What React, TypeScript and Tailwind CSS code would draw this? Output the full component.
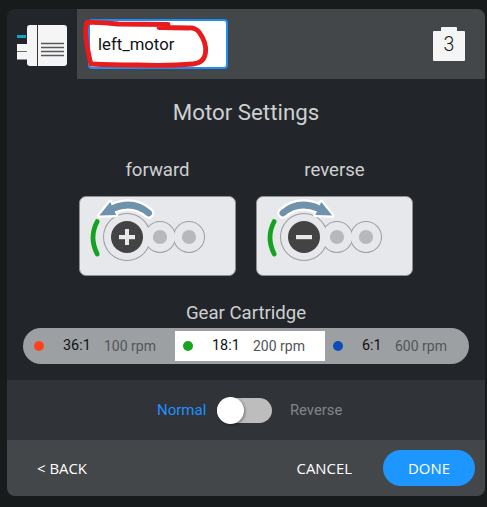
import React from "react";

const roboto = "font-['Roboto','Liberation_Sans',sans-serif]";
const openSans = "font-['Open_Sans','Noto_Sans',sans-serif]";

function MotorIcon() {
  return (
    <svg width="50" height="42" viewBox="0 0 50 42">
      <rect x="0" y="10" width="9" height="3" fill="#0aa5c9" />
      <rect x="0" y="19" width="11" height="15.5" fill="#f5f5f5" />
      <rect x="0" y="26" width="10" height="1" fill="#6b6f71" />
      <rect x="10" y="0" width="40" height="41" rx="3" fill="#f5f5f5" />
      <rect x="20" y="0" width="1" height="41" fill="#34383a" />
      <path d="M24 18.5H47M24 22.5H47M24 26.5H47M24 30.5H47" stroke="#55595b" strokeWidth="1.3" />
    </svg>
  );
}

function GearCard({ reverse = false }: { reverse?: boolean }) {
  return (
    <div className="h-20 w-[157px] overflow-hidden rounded-[7px] border border-[#8e9092] bg-[#e7e8ec]">
      <svg className="-ml-px -mt-px" width="157" height="80" viewBox="0 0 157 80">
        <g fill="none" stroke="#9d9ea0" strokeWidth="2">
          <circle cx="48" cy="41" r="23" />
          <circle cx="81" cy="41" r="15" />
          <circle cx="110" cy="41" r="15" />
        </g>
        <g fill="#e7e8ec">
          <circle cx="48" cy="41" r="23" />
          <circle cx="81" cy="41" r="15" />
          <circle cx="110" cy="41" r="15" />
        </g>
        <circle cx="48" cy="41" r="16" fill="#434343" />
        <circle cx="81" cy="41" r="7.1" fill="#b7b8ba" />
        <circle cx="110" cy="41" r="7.1" fill="#b7b8ba" />
        <rect x="40" y="39" width="16" height="4.2" fill="#e7e8ec" />
        {!reverse && <rect x="46" y="33" width="4" height="16" fill="#e7e8ec" />}
        <path d="M18.2 25.5Q9.8 41.5 18.2 58" fill="none" stroke="#14a321" strokeWidth="4.8" strokeLinecap="round" />
        <g transform={reverse ? "translate(96.5 0) scale(-1 1)" : undefined}>
          <g stroke="#fff" strokeLinejoin="round" strokeLinecap="round">
            <path d="M34 12.5Q54 3.8 69.6 17" fill="none" strokeWidth="11.4" />
            <path d="M20.3 19.6L31.2 6L37.2 19Z" fill="#fff" strokeWidth="4.5" />
          </g>
          <path d="M34 12.5Q54 3.8 69.6 17" fill="none" stroke="#7093ad" strokeWidth="6.8" strokeLinecap="round" />
          <path d="M20.3 19.6L31.2 6L37.2 19Z" fill="#7093ad" />
        </g>
      </svg>
    </div>
  );
}

function Cartridge({ dot, ratio, rpm, className }: { dot: string; ratio: string; rpm: string; className: string }) {
  return (
    <div className={`flex h-[30px] items-center text-[14.4px] leading-none ${className}`}>
      <span className={`size-2.5 shrink-0 rounded-full ${dot}`} />
      <span className="ml-[19px] w-7 text-[#111]">{ratio}</span>
      <span className="whitespace-nowrap pb-px text-[14px] text-[#515558]">{rpm}</span>
    </div>
  );
}

export default function App() {
  return (
    <div className={`h-[507px] w-[487px] overflow-hidden bg-[#171b1c] pl-[7px] pt-[9px] ${roboto}`}>
      <div className="flex h-[487px] w-[478px] flex-col overflow-hidden rounded-[8px] bg-[#22262a]">
        <header className="flex h-[70px] shrink-0">
          <div className="w-[70px] pl-[10px] pt-4">
            <MotorIcon />
          </div>
          <div className="flex flex-1 justify-between bg-[#434749] pl-[11px] pr-5 pt-[10px]">
            <div className="relative h-[50px] w-[140px] rounded-[4px] border-2 border-[#1e90f5] bg-white">
              <span className="block pl-[8px] pt-[12px] text-[16.7px] leading-6 text-[#111]">left_motor</span>
              <svg className="absolute -left-[8px] -top-[6px] overflow-visible" width="134" height="58" viewBox="82 15 134 58">
                <path
                  d="M168 24.5L118 24Q101 22 87 22.5Q84.5 29 87 45Q89 57 91 64Q111 65 137 65Q170 66 193 64Q204 63 205.5 53Q207 43 199 32Q195 27.5 189 28L159 27.5"
                  fill="none" stroke="#e81c1c" strokeWidth="4.8" strokeLinecap="round" strokeLinejoin="round"
                />
              </svg>
            </div>
            <div className="relative mt-2 flex h-[34px] w-8 flex-col items-center">
              <div className="h-1 w-4 rounded-t-[1px] bg-[#f5f5f5]" />
              <div className="flex h-[30px] w-8 items-center justify-center rounded-[1px] bg-[#f5f5f5] pb-[3px] text-[19.5px] font-light leading-none text-[#181b1e]">3</div>
            </div>
          </div>
        </header>

        <main className="h-[301px] shrink-0 text-[#ced0d1]">
          <h1 className="pt-[18px] text-center text-[22.3px] leading-[30px]">Motor Settings</h1>
          <div className="mt-[31px] flex gap-5 pl-[72px]">
            <section>
              <h2 className="mb-[14px] text-center text-[18.6px] leading-6">forward</h2>
              <GearCard />
            </section>
            <section>
              <h2 className="mb-[14px] text-center text-[18.6px] leading-6">reverse</h2>
              <GearCard reverse />
            </section>
          </div>
          <h2 className="mt-6 text-center text-[18.6px] leading-[26px]">Gear Cartridge</h2>
          <div className="ml-4 mt-0.5 flex h-9 w-[446px] items-center rounded-full bg-[#9da0a3]">
            <Cartridge className="w-[152px] pl-[11px] [&>span:last-child]:ml-[13px]" dot="bg-[#ff421c]" ratio="36:1" rpm="100 rpm" />
            <Cartridge className="w-[150px] bg-white pl-2 [&>span:last-child]:ml-[13px]" dot="bg-[#18a422]" ratio="18:1" rpm="200 rpm" />
            <Cartridge className="w-[144px] pl-2 [&>span:last-child]:ml-[5px]" dot="bg-[#0b4cb8]" ratio="6:1" rpm="600 rpm" />
          </div>
        </main>

        <div className="flex h-[60px] shrink-0 items-center bg-[#303338] pl-[150px] text-[15px]">
          <span className="w-[60px] text-[#1e90ff]">Normal</span>
          <div className="flex h-[25px] w-[55px] items-center rounded-full bg-[#bdbdbd]">
            <div className="size-[27px] shrink-0 rounded-full bg-white shadow-[1px_1px_3px_rgba(0,0,0,0.4)]" />
          </div>
          <span className="ml-[18px] text-[14.8px] text-[#838588]">Reverse</span>
        </div>

        <footer className={`flex h-14 shrink-0 items-center bg-[#434749] pl-[30px] pr-[10px] text-[14.9px] text-white ${openSans}`}>
          <span>&lt; BACK</span>
          <span className="ml-auto mr-[31px]">CANCEL</span>
          <button className="h-9 w-[92px] rounded-full bg-[#1e96ff]">DONE</button>
        </footer>
      </div>
    </div>
  );
}
